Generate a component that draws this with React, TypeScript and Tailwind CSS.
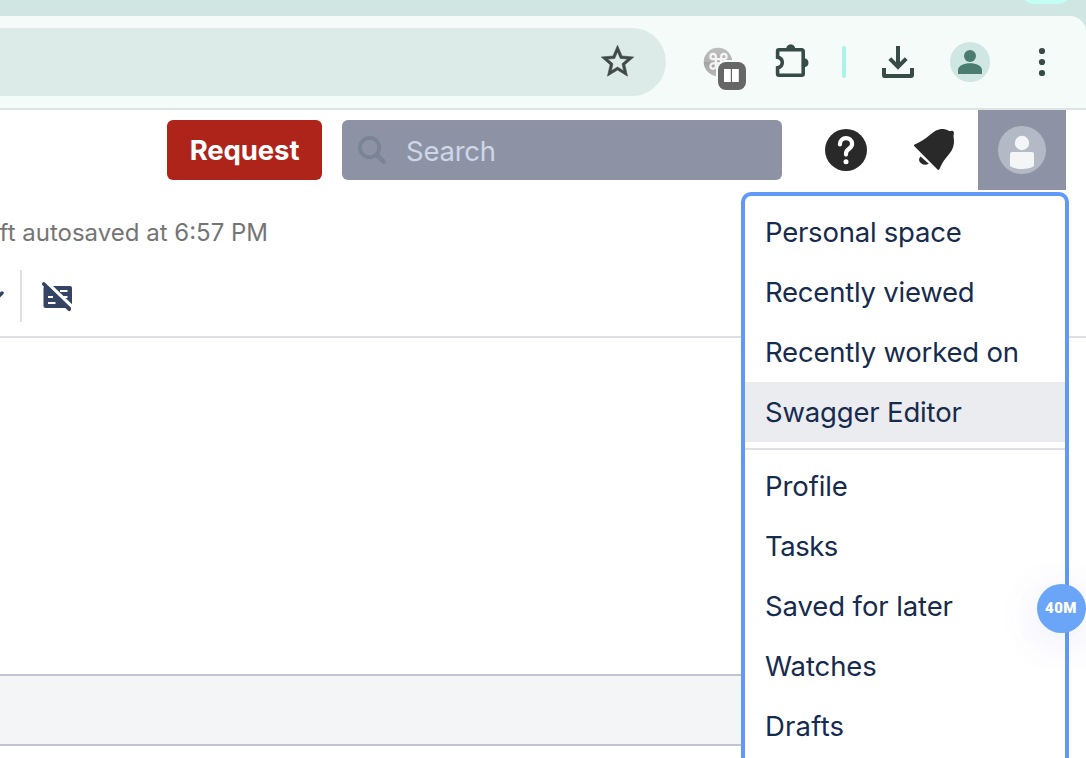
import React from "react";

const font = "font-['Inter','Liberation_Sans',sans-serif]";

function BrowserBar() {
  return (
    <div className="bg-[#d0e6e2] pt-4">
      <div className="absolute left-[1022px] top-[-20px] h-6 w-[48px] rounded-[16px] bg-[#c3fff3]" />
      <div className="flex h-[94px] items-center rounded-tr-[16px] border-b-2 border-[#dbe5e1] bg-[#f5fbf9]">
        <div className="flex h-[68px] w-[666px] items-center justify-end rounded-r-full bg-[#ddebe8] pb-[2px] pr-[29px]">
          <svg className="h-[39px] w-[39px]" viewBox="0 0 24 24" fill="#414947" stroke="#414947" strokeWidth=".35">
            <path d="M22 9.24l-7.19-.62L12 2 9.19 8.63 2 9.24l5.46 4.73L5.82 21 12 17.27 18.18 21l-1.63-7.03L22 9.24zM12 15.4l-3.76 2.27 1-4.28-3.32-2.88 4.38-.38L12 6.1l1.71 4.04 4.38.38-3.32 2.88 1 4.28L12 15.4z" />
          </svg>
        </div>
        <svg className="ml-[34px] h-[56px] w-[50px] overflow-visible" viewBox="0 0 50 56">
          <defs>
            <linearGradient id="ext" x1="0" y1="0" x2="0" y2="1">
              <stop offset="0" stopColor="#bdbdbd" />
              <stop offset=".5" stopColor="#b2b2b2" />
              <stop offset=".52" stopColor="#a3a3a3" />
              <stop offset="1" stopColor="#b8b8b8" />
            </linearGradient>
          </defs>
          <circle cx="18" cy="28" r="14.3" fill="url(#ext)" />
          <path d="M15.800 24.800v-2.300a2.700 2.700 0 1 0-2.700 2.700h10.800a2.700 2.700 0 1 0-2.700-2.700v9.600a2.700 2.700 0 1 0 2.700-2.700h-10.800a2.700 2.700 0 1 0 2.700 2.700z" fill="none" stroke="#f5f5f5" strokeWidth="2.200" />
          <path d="M46 26H25a9 9 0 0 0-9 9v14h30z" fill="#f5fbf9" />
          <rect x="18" y="28" width="28" height="28" rx="8" fill="#666" />
          <path d="M24 35h6.800v13H24zM32 35h6.800v13H32z" fill="#fff" />
        </svg>
        <svg className="mb-[2px] ml-[21px] h-[40px] w-[42px] overflow-visible" viewBox="0 0 42 40">
          <path d="M8.400 8.800h22.400a1.400 1.400 0 0 1 1.400 1.400v22.600a1.400 1.400 0 0 1-1.400 1.400H8a1.400 1.400 0 0 1-1.400-1.400v-6c6.200-1 6.200-9.600 0-10.600v-6A1.400 1.400 0 0 1 8 8.800z" fill="none" stroke="#374b47" strokeWidth="3.600" />
          <path d="M15 8.500a4.700 5.300 0 0 1 9.400 0zM33.500 17.200a5 4.600 0 0 1 0 9z" fill="#374b47" />
        </svg>
        <div className="ml-[29px] h-8 w-1 rounded-full bg-[#abf3e7]" />
        <svg className="ml-[36px] h-8 w-8" viewBox="0 0 32 32" fill="none" stroke="#374b47" strokeWidth="4">
          <path d="M16 0v20M7.800 12.600l8.200 8.200 8.200-8.200" />
          <path d="M2 22v7.200a.8.8 0 0 0 .8.8h26.400a.8.8 0 0 0 .8-.8V22" />
        </svg>
        <svg className="ml-[36px] h-10 w-10" viewBox="0 0 40 40">
          <circle cx="20" cy="20" r="20" fill="#d0e6e2" />
          <circle cx="20" cy="14" r="6" fill="#4a7c70" />
          <path d="M8 32v-4c0-4 6-6.700 12-6.700S32 24 32 28v4z" fill="#4a7c70" />
        </svg>
        <svg className="ml-[48px] h-8 w-2" viewBox="0 0 8 32" fill="#374b47">
          <circle cx="4" cy="5" r="3.100" />
          <circle cx="4" cy="16" r="3.100" />
          <circle cx="4" cy="27" r="3.100" />
        </svg>
      </div>
    </div>
  );
}

function SiteHeader() {
  return (
    <header className="flex h-20 items-center">
      <button className="ml-[167px] flex h-[60px] w-[155px] items-center justify-center rounded-[6px] bg-[#ae241a] pt-[2px] text-[27.5px] font-bold tracking-[-0.1px] text-white">
        Request
      </button>
      <div className="ml-5 flex h-[60px] w-[440px] items-center rounded-[6px] bg-[#8d93a4] pl-4">
        <svg className="h-[29px] w-[29px]" viewBox="0 0 29 29" fill="none" stroke="#7b8396" strokeLinecap="round">
          <circle cx="11.600" cy="11.600" r="9.700" strokeWidth="3.800" />
          <path d="M19.500 19.500l6.200 6.200" strokeWidth="4.600" />
        </svg>
        <span className="ml-[19px] pt-[3px] text-[27.5px] tracking-[-0.25px] text-[#ced6e8]">Search</span>
      </div>
      <svg className="ml-[43px] h-[42px] w-[42px]" viewBox="0 0 42 42">
        <circle cx="21" cy="21" r="21" fill="#292929" />
        <path d="M14.900 15.400c0-8.400 12.200-8.400 12.200-.4 0 4.800-6.100 4.600-6.100 9.400v1.200" fill="none" stroke="#fff" strokeWidth="4.200" strokeLinecap="round" />
        <circle cx="21" cy="32.800" r="2.500" fill="#fff" />
      </svg>
      <svg className="ml-[46px] h-[44px] w-[42px]" viewBox="0 0 42 44" fill="#292929">
        <path d="M1.400 18.200c-.7-.6-.5-1.300.3-1.700C12 12.600 16.500 6.300 23 2.600c4-2.200 8.500-2.100 12.300-.1.700.3 1.700.8 2.600.5.800-.7 2.800-.3 3 1.400.2 1.500-.5 2.600-.4 3.800.9 4.500.8 9.600-1.700 14-4 6.300-8.400 9.200-12.400 19-.4.8-1.300.9-1.900.3z" />
        <path d="M7.600 28.500l8.200 7.200c-3.300 1.900-7.100 1-9-1.600-1.300-2-.8-4.300.8-5.600z" />
      </svg>
      <div className="ml-[23px] flex h-20 w-[88px] items-center justify-center bg-[#8d93a4]">
        <svg className="h-12 w-12" viewBox="0 0 48 48">
          <circle cx="24" cy="24" r="24" fill="#b3bac5" />
          <circle cx="24" cy="17" r="7.200" fill="#f4f5f7" />
          <path d="M12 28a2 2 0 0 1 2-2h20a2 2 0 0 1 2 2v12c-5 4-19 4-24 0z" fill="#f4f5f7" />
        </svg>
      </div>
    </header>
  );
}

function EditorBar() {
  return (
    <div className="flex h-[148px] flex-col border-b-2 border-[#dfe0e6]">
      <div className="flex h-[80px] w-[268px] items-center justify-end">
        <span className="mt-[5px] whitespace-nowrap text-[24px] text-[#757575]">ft autosaved at 6:57 PM</span>
      </div>
      <div className="flex h-[52px] items-center">
        <svg className="h-4 w-5" viewBox="0 0 20 16" fill="none" stroke="#344563" strokeWidth="3.500" strokeLinecap="round">
          <path d="M-7 5l4.500 4.500L2 5" />
        </svg>
        <div className="h-[52px] w-[2px] bg-[#dfe0e6]" />
        <svg className="ml-[18px] h-8 w-8" viewBox="0 0 32 32">
          <path d="M5.500 6H30a2 2 0 0 1 2 2v18a2 2 0 0 1-2 2H5.500a2 2 0 0 1-2-2V8a2 2 0 0 1 2-2z" fill="#344563" />
          <path d="M8 17h5M8 23h7.500M20 11h7.500M23 17h4.500" stroke="#fff" strokeWidth="2.200" />
          <path d="M7.500 3L34 28.500" stroke="#fff" strokeWidth="3.200" />
          <path d="M3.800 4L29.200 29.200" stroke="#344563" strokeWidth="3.800" strokeLinecap="round" />
        </svg>
      </div>
    </div>
  );
}

const recent = [
  ["Personal space", "tracking-[-0.23px]"],
  ["Recently viewed", "tracking-[-0.23px]"],
  ["Recently worked on", "tracking-[-0.2px]"],
  ["Swagger Editor", "tracking-[-0.17px]"],
];
const account = [
  ["Profile", "tracking-[-0.1px]"],
  ["Tasks", "tracking-[-0.5px]"],
  ["Saved for later", "tracking-[-0.1px]"],
  ["Watches", "tracking-[-0.1px]"],
  ["Drafts", "tracking-[0.2px]"],
];

function Item({ label, spacing, active }: { label: string; spacing: string; active?: boolean }) {
  return (
    <li className={`flex h-[60px] items-center whitespace-nowrap pl-5 pt-[2px] ${spacing} ${active ? "bg-[#ebecf0]" : ""}`}>
      {label}
    </li>
  );
}

function UserMenu() {
  return (
    <div className="absolute left-[741px] top-[192px] h-[600px] w-[328px] rounded-[10px] border-4 border-[#6099f8] bg-white pt-[6px] text-[27.5px] text-[#172b4d]">
      <ul>
        {recent.map(([label, spacing]) => (
          <Item key={label} label={label} spacing={spacing} active={label === "Swagger Editor"} />
        ))}
      </ul>
      <ul className="mt-[6px] border-t-2 border-[#dfe0e6] pt-[6px]">
        {account.map(([label, spacing]) => (
          <Item key={label} label={label} spacing={spacing} />
        ))}
      </ul>
    </div>
  );
}

export default function App() {
  return (
    <div className={`relative h-[758px] w-[1086px] overflow-hidden bg-white ${font}`}>
      <BrowserBar />
      <SiteHeader />
      <EditorBar />
      <main className="h-[336px]" />
      <footer className="mr-10 h-[72px] border-y-2 border-[#c1c3cf] bg-[#f4f5f7]" />
      <UserMenu />
      <div className="absolute left-[1036.5px] top-[584px] flex h-[49px] w-[49px] items-center justify-center rounded-full bg-[#6ba5f8] font-['Roboto',sans-serif] text-[15px] font-black tracking-[0.5px] text-white shadow-[0_8px_40px_rgba(90,100,220,0.14)]">
        40M
      </div>
    </div>
  );
}
